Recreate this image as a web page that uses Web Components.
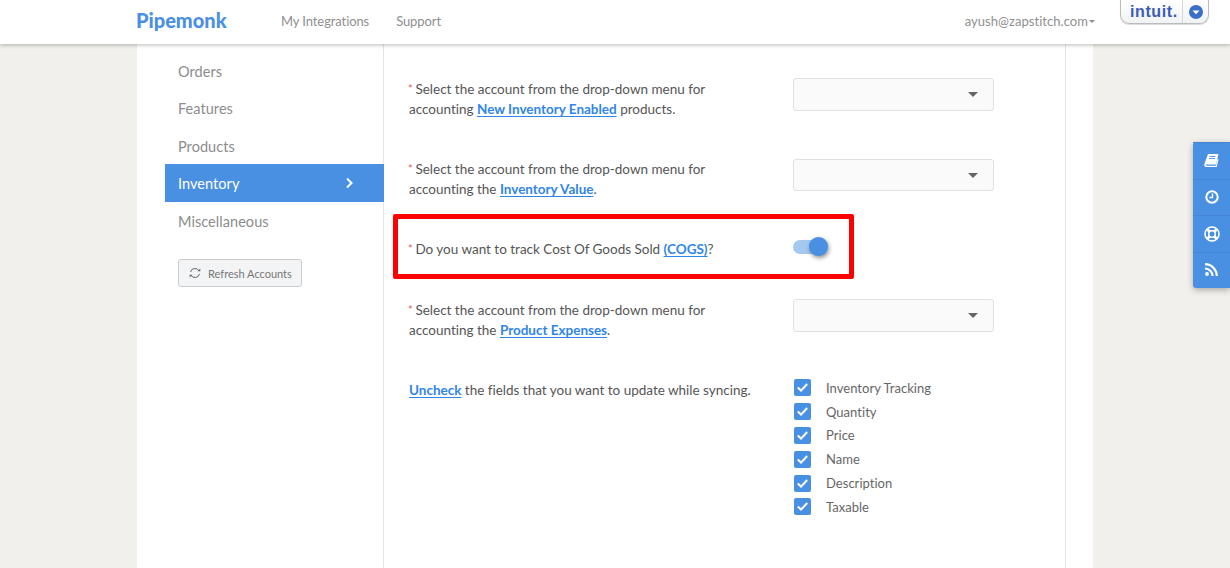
<!DOCTYPE html>
<html lang="en">
  <head>
    <meta charset="UTF-8" />
    <title>Pipemonk</title>
    <style>
      html, body { margin: 0; height: 100%; overflow: hidden; }
      body { background: #f1f0ec; font-family: Lato, "Open Sans", sans-serif; color: #555; }
    </style>
  </head>
  <body>
    <pm-header></pm-header>
    <pm-page>
      <pm-sidebar slot="side">
        <pm-nav-item>Orders</pm-nav-item>
        <pm-nav-item>Features</pm-nav-item>
        <pm-nav-item>Products</pm-nav-item>
        <pm-nav-item active>Inventory</pm-nav-item>
        <pm-nav-item>Miscellaneous</pm-nav-item>
        <pm-refresh>Refresh Accounts</pm-refresh>
      </pm-sidebar>

      <pm-row required gap="40">
        Select the account from the drop-down menu for<br />accounting
        <a href="#">New Inventory Enabled</a> products.
        <pm-select slot="control"></pm-select>
      </pm-row>
      <pm-row required gap="40">
        Select the account from the drop-down menu for<br />accounting the
        <a href="#">Inventory Value</a>.
        <pm-select slot="control" style="margin-top: 0; height: 32px"></pm-select>
      </pm-row>
      <pm-row required highlight gap="41">
        Do you want to track Cost Of Goods Sold <a href="#">(COGS)</a>?
        <pm-toggle slot="control"></pm-toggle>
      </pm-row>
      <pm-row required gap="40">
        Select the account from the drop-down menu for<br />accounting the
        <a href="#">Product Expenses</a>.
        <pm-select slot="control"></pm-select>
      </pm-row>
      <pm-row gap="40">
        <a href="#">Uncheck</a> the fields that you want to update while syncing.
        <pm-checks slot="control">
          <pm-check>Inventory Tracking</pm-check>
          <pm-check>Quantity</pm-check>
          <pm-check>Price</pm-check>
          <pm-check>Name</pm-check>
          <pm-check>Description</pm-check>
          <pm-check>Taxable</pm-check>
        </pm-checks>
      </pm-row>
    </pm-page>
    <pm-dock></pm-dock>

    <script>
      function define(name, html, setup) {
        customElements.define(
          name,
          class extends HTMLElement {
            constructor() {
              super();
              this.attachShadow({ mode: "open" }).innerHTML = html;
            }
            connectedCallback() {
              if (setup) setup(this);
            }
          }
        );
      }

      define(
        "pm-header",
        `<style>
          :host { display: flex; position: relative; z-index: 2; height: 44px; padding: 0 21px 0 136px;
            background: #fff; box-shadow: 0 1px 4px rgba(0,0,0,.28); font-size: 13px; color: #8f8f8f; }
          .logo { font-size: 20px; font-weight: 900; color: #4a90e2; width: 145px; line-height: 41px; }
          nav { display: flex; gap: 27px; line-height: 42px; letter-spacing: -.1px; }
          .user { margin-left: auto; line-height: 42px; display: flex; letter-spacing: .05px; }
          .caret { width: 0; height: 0; border: 3.500px solid transparent; border-top-color: #8f8f8f; border-bottom: 0; margin: 20px 0 0 1px; }
          .intuit { margin-left: 25px; width: 89px; flex: none; height: 24px; box-sizing: border-box; display: flex; align-items: center;
            border: 1px solid #bbb; border-top: 0; border-radius: 0 0 9px 9px; background: linear-gradient(#fff, #f1f2f4); box-shadow: 0 1px 1px rgba(0,0,0,.15); }
          .word { width: 61px; flex: none; box-sizing: border-box; padding: 1px 0 0 9px; font: 700 16px/20px "Liberation Sans", sans-serif; color: #3a5cb8; letter-spacing: .6px; }
          .drop { flex: 1; height: 100%; border-left: 1px solid #d8d8d8; display: flex; align-items: center; justify-content: center; }
          svg { display: block; }
        </style>
        <div class="logo">Pipemonk</div>
        <nav><span>My Integrations</span><span>Support</span></nav>
        <div class="user">ayush@zapstitch.com<i class="caret"></i></div>
        <div class="intuit">
          <span class="word">intuit.</span>
          <span class="drop"><svg width="14" height="14" viewBox="0 0 14 14"><circle cx="7" cy="7" r="7" fill="#3a6fc9"/><path d="M3.500 5.600h7L7 9.200z" fill="#fff"/></svg></span>
        </div>`
      );

      define(
        "pm-page",
        `<style>
          :host { display: block; width: 956px; height: 524px; margin-left: 137px; background: #fff; }
          .inner { display: flex; height: 100%; width: 928px; border-right: 1px solid #e6e6e6; }
          .side { display: block; width: 246px; flex: none; border-right: 1px solid #e6e6e6; }
          main { flex: 1; padding-top: 35px; display: flex; flex-direction: column; }
        </style>
        <div class="inner">
          <div class="side"><slot name="side"></slot></div>
          <main><slot></slot></main>
        </div>`
      );

      define(
        "pm-sidebar",
        `<style>
          :host { display: flex; flex-direction: column; padding: 7.500px 0 0 28px; }
        </style>
        <slot></slot>`
      );

      define(
        "pm-nav-item",
        `<style>
          :host { display: flex; align-items: center; justify-content: space-between; height: 37.500px; padding: 2px 30px 0 13px;
            box-sizing: border-box; font-size: 14.500px; color: #8c8c8c; letter-spacing: .05px; }
          :host([active]) { background: #4a90e2; color: #fff; margin-right: -1px; }
          svg { display: none; }
          :host([active]) svg { display: block; margin-top: -2px; }
        </style>
        <slot></slot>
        <svg width="9" height="12" viewBox="0 0 9 12"><path d="M2 1.500 6.500 6 2 10.500" fill="none" stroke="#fff" stroke-width="2"/></svg>`
      );

      define(
        "pm-refresh",
        `<style>
          :host { display: flex; align-items: center; gap: 7px; width: 124px; height: 28px; box-sizing: border-box; margin: 20px 0 0 13px; padding-left: 10px;
            border: 1px solid #ccc; border-radius: 3px; background: #f3f4f6; font-size: 11px; color: #777; }
          svg { flex: none; }
        </style>
        <svg width="12" height="12" viewBox="0 0 12 12" fill="none" stroke="#666" stroke-width="1"><path d="M1.500 5A4.600 4.600 0 0 1 10 3.800M10.500 7A4.600 4.600 0 0 1 2 8.200"/><path d="M8.500 4.200h2.800V1.600z" fill="#666" stroke="none"/><path d="M3.500 7.800H.7v2.600z" fill="#666" stroke="none"/></svg>
        <span><slot></slot></span>`
      );

      define(
        "pm-row",
        `<style>
          :host { display: block; position: relative; font-size: 13.500px; line-height: 20px; color: #555; letter-spacing: -.01px; }
          .row { display: grid; grid-template-columns: 384px 201px; align-items: start; padding-left: 25px; }
          .star { display: none; width: 4px; margin-left: -1px; color: #e4595a; font-size: 11px; line-height: 0; vertical-align: 1px; }
          :host([required]) .star { display: inline-block; }
          ::slotted(a) { color: #2f86e8; font-weight: 700; text-decoration: underline; text-underline-offset: 2px; }
          .box { display: none; position: absolute; left: 9px; top: -25px; width: 461px; height: 65px; box-sizing: border-box;
            border: 5px solid #f00; border-radius: 2px; pointer-events: none; }
          :host([highlight]) .box { display: block; }
        </style>
        <div class="row">
          <div><span class="star">*</span><slot></slot></div>
          <div><slot name="control"></slot></div>
        </div>
        <div class="box"></div>`,
        (el) => (el.style.marginBottom = el.getAttribute("gap") + "px")
      );

      define(
        "pm-select",
        `<style>
          :host { display: flex; align-items: center; justify-content: flex-end; height: 33px; margin-top: -1px; box-sizing: border-box; padding-right: 15px;
            background: #fafafa; border: 1px solid #e1e1e1; border-radius: 3px; }
          i { width: 0; height: 0; border: 5px solid transparent; border-top-color: #666; border-bottom: 0; }
        </style>
        <i></i>`
      );

      define(
        "pm-toggle",
        `<style>
          :host { display: block; position: relative; width: 36px; height: 20px; margin-top: -2px; }
          .track { position: absolute; left: 0; top: 3px; width: 30px; height: 14px; border-radius: 7px; background: #a5c8f1; }
          .knob { position: absolute; right: 1px; top: 0; width: 19px; height: 19px; border-radius: 50%; background: #4a90e2;
            box-shadow: 1px 2px 4px rgba(0,0,0,.45); }
        </style>
        <div class="track"></div><div class="knob"></div>`
      );

      define(
        "pm-checks",
        `<style>
          :host { display: flex; flex-direction: column; margin-top: -4px; }
        </style>
        <slot></slot>`
      );

      define(
        "pm-check",
        `<style>
          :host { display: flex; align-items: center; gap: 15px; height: 23.800px; padding-left: 1px; font-size: 13px; color: #666; letter-spacing: .03px; }
          .b { width: 17px; height: 17px; border-radius: 2px; background: #4a90e2; display: flex; align-items: center; justify-content: center; }
        </style>
        <span class="b"><svg width="13" height="11" viewBox="0 0 13 11"><path d="M1.800 5.600 5 8.600 11.200 2" fill="none" stroke="#fff" stroke-width="2"/></svg></span>
        <span><slot></slot></span>`
      );

      define(
        "pm-dock",
        `<style>
          :host { display: flex; flex-direction: column; position: fixed; z-index: 3; right: 0; top: 142px; width: 37px; height: 146px;
            background: #4a90e2; border-radius: 3px 0 0 3px; box-shadow: 0 2px 6px rgba(0,0,0,.3); }
          div { flex: 1; display: flex; align-items: center; justify-content: center; border-top: 1px solid #4585d3; }
          div:first-child { border-top: 0; }
          svg { display: block; }
        </style>
        <div><svg width="15" height="14" viewBox="0 0 15 14" style="margin-top:-2px"><path d="M4 1h10.500L12 11.500H2.500C1.500 11.500 1.300 12.800 2.500 12.800H12L13.500 6 14.500 6.500 12.800 14H2C.5 14 0 12.500.4 11z" fill="#fff"/><path d="M5.500 3.500h6M5 5.500h6" stroke="#4a90e2" stroke-width=".9"/></svg></div>
        <div><svg width="14" height="14" viewBox="0 0 14 14" fill="none" stroke="#fff"><circle cx="7" cy="7" r="5.700" stroke-width="2"/><path d="M7.500 3.500v4H4.500" stroke-width="1.300"/></svg></div>
        <div><svg width="16" height="16" viewBox="0 0 16 16" fill="none" stroke="#fff"><circle cx="8" cy="8" r="7" stroke-width="1.600"/><circle cx="8" cy="8" r="3.300" stroke-width="1.500"/><path d="M3 3l3 3M13 3l-3 3M3 13l3-3M13 13l-3-3" stroke-width="2.600"/></svg></div>
        <div><svg width="13" height="13" viewBox="0 0 13 13" fill="none" stroke="#fff" stroke-width="2.200" style="margin-top:-1px"><circle cx="2" cy="11" r="1.900" fill="#fff" stroke="none"/><path d="M0 5.500A7.500 7.500 0 0 1 7.500 13M0 1.200A11.800 11.800 0 0 1 11.800 13"/></svg></div>`
      );
    </script>
  </body>
</html>
